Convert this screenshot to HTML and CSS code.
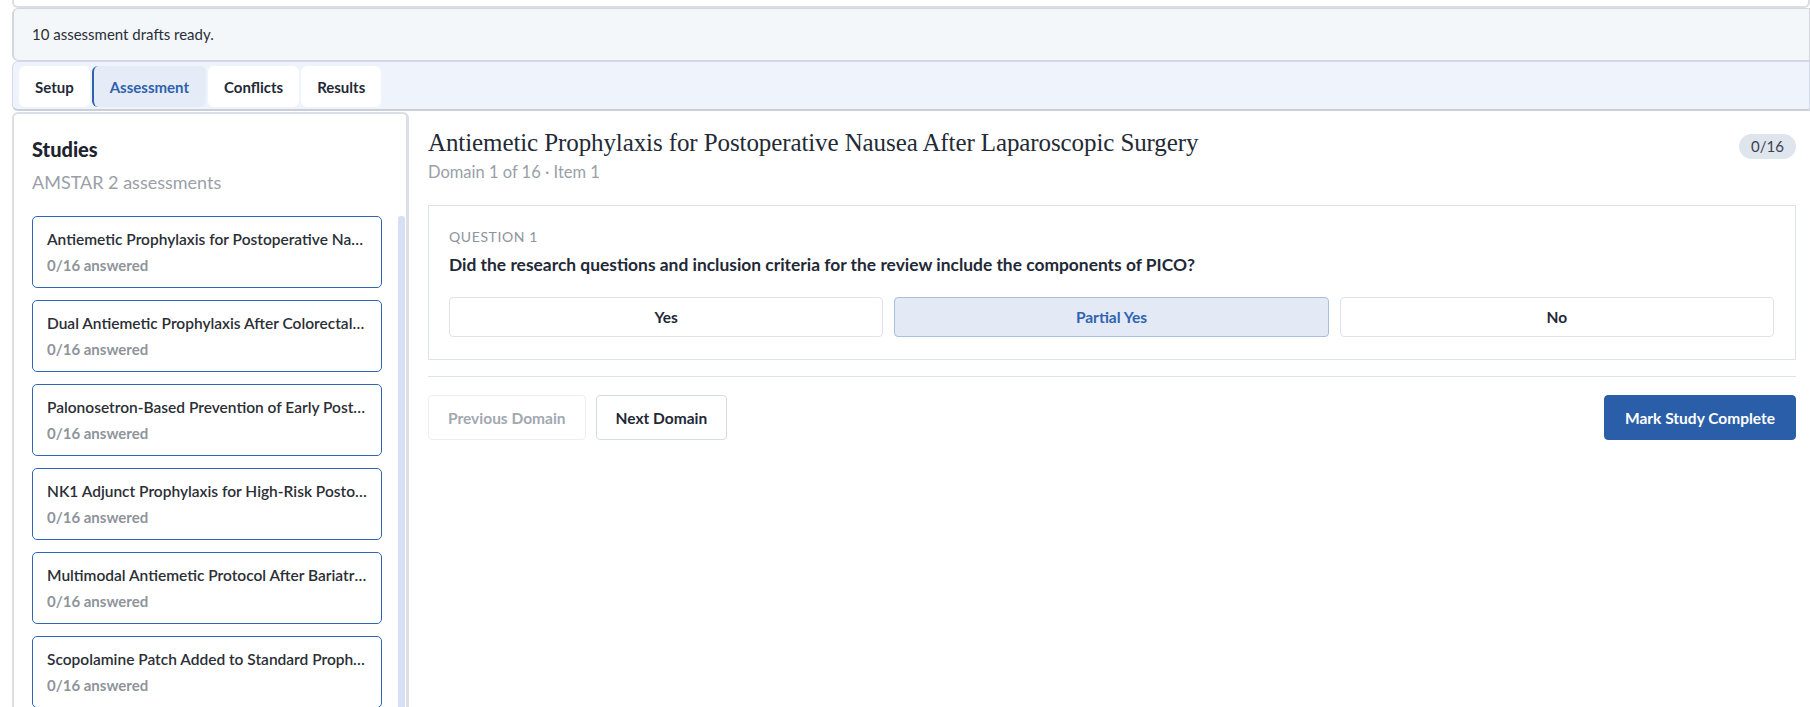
FILE: index.html
```html
<!DOCTYPE html>
<html lang="en">
<head>
  <meta charset="UTF-8">
  <title>AMSTAR 2 Assessment</title>
  <link rel="stylesheet" href="styles.css">
</head>
<body>
  <div class="page">
    <div class="top-stub"></div>

    <div class="notice">10 assessment drafts ready.</div>

    <nav class="tabs">
      <button class="tab">Setup</button>
      <button class="tab active">Assessment</button>
      <button class="tab">Conflicts</button>
      <button class="tab">Results</button>
    </nav>

    <div class="workspace">
      <aside class="sidebar">
        <h2>Studies</h2>
        <p class="sidebar-sub">AMSTAR 2 assessments</p>

        <div class="study-scroll">
          <div class="study-list">
            <div class="study-card">
              <div class="study-title">Antiemetic Prophylaxis for Postoperative Nausea After Laparoscopic Surgery</div>
              <div class="study-meta">0/16 answered</div>
            </div>
            <div class="study-card">
              <div class="study-title">Dual Antiemetic Prophylaxis After Colorectal Surgery</div>
              <div class="study-meta">0/16 answered</div>
            </div>
            <div class="study-card">
              <div class="study-title">Palonosetron-Based Prevention of Early Postoperative Vomiting</div>
              <div class="study-meta">0/16 answered</div>
            </div>
            <div class="study-card">
              <div class="study-title">NK1 Adjunct Prophylaxis for High-Risk Postoperative Patients</div>
              <div class="study-meta">0/16 answered</div>
            </div>
            <div class="study-card">
              <div class="study-title">Multimodal Antiemetic Protocol After Bariatric Surgery</div>
              <div class="study-meta">0/16 answered</div>
            </div>
            <div class="study-card">
              <div class="study-title">Scopolamine Patch Added to Standard Prophylaxis</div>
              <div class="study-meta">0/16 answered</div>
            </div>
          </div>
          <div class="scroll-thumb"></div>
        </div>
      </aside>

      <main class="assessment">
        <header class="assessment-head">
          <div>
            <h1>Antiemetic Prophylaxis for Postoperative Nausea After Laparoscopic Surgery</h1>
            <p class="position">Domain 1 of 16 · Item 1</p>
          </div>
          <span class="progress-badge">0/16</span>
        </header>

        <section class="question">
          <div class="question-label">Question 1</div>
          <p class="question-text">Did the research questions and inclusion criteria for the review include the components of PICO?</p>
          <div class="options">
            <button class="option">Yes</button>
            <button class="option selected">Partial Yes</button>
            <button class="option">No</button>
          </div>
        </section>

        <div class="nav-row">
          <button class="btn" disabled>Previous Domain</button>
          <button class="btn">Next Domain</button>
          <button class="btn primary">Mark Study Complete</button>
        </div>
      </main>
    </div>
  </div>
</body>
</html>
```

FILE: styles.css
```css
* {
  box-sizing: border-box;
}

html, body {
  margin: 0;
  padding: 0;
  background: #ffffff;
  overflow: hidden;
}

body {
  font-family: Lato, 'Noto Sans', sans-serif;
  color: #1f2937;
}

button {
  font-family: inherit;
}

.page {
  padding-left: 12px;
  height: 707px;
  display: flex;
  flex-direction: column;
}

.top-stub {
  height: 8px;
  border: 2px solid #dadde2;
  border-top: none;
  border-radius: 0 0 6px 6px;
}

.notice {
  height: 53px;
  padding: 0 18px;
  line-height: 51px;
  font-size: 15px;
  color: #2a2f37;
  background: #f4f7f9;
  border: 1px solid #d3d7dc;
  border-left-width: 2px;
  border-radius: 6px 0 0 6px;
}

.tabs {
  height: 50px;
  display: flex;
  gap: 2px;
  padding: 4px 6px;
  background: #eff3fc;
  border: 1px solid #d3d9e8;
  border-bottom: 2px solid #c9ced8;
  border-radius: 6px 0 0 6px;
}

.tab {
  height: 41px;
  padding: 0 16px;
  border: none;
  border-radius: 6px;
  background: #ffffff;
  color: #1f2937;
  font-size: 15px;
  font-weight: 700;
}

.tab.active {
  padding: 0 17px 0 16px;
  background: #e5ebf7;
  color: #2f62ad;
  border-left: 2px solid #2f62ad;
  border-radius: 6px;
}

.workspace {
  flex: 1;
  min-height: 0;
  margin-top: 1px;
  display: grid;
  grid-template-columns: 397px 1fr;
}

.sidebar {
  border: 2px solid #dcdfe3;
  border-bottom: none;
  border-right-width: 3px;
  border-radius: 6px 6px 0 0;
  padding: 22px 0 0 18px;
  overflow: hidden;
}

.sidebar h2 {
  margin: 0;
  font-size: 20px;
  font-weight: 900;
  color: #1c2430;
  line-height: 26px;
}

.sidebar-sub {
  margin: 9px 0 0;
  font-size: 18px;
  color: #9aa0a8;
  line-height: 22px;
}

.study-scroll {
  display: flex;
  margin-top: 23px;
}

.study-list {
  width: 350px;
  display: flex;
  flex-direction: column;
  gap: 12px;
}

.study-card {
  height: 72px;
  padding: 11px 13px 0 14px;
  border: 1px solid #2f65b5;
  border-radius: 5px;
  background: #ffffff;
}

.study-title {
  font-size: 15.5px;
  font-weight: 600;
  color: #2b2f36;
  line-height: 22px;
  white-space: nowrap;
  overflow: hidden;
  text-overflow: ellipsis;
}

.study-meta {
  margin-top: 4px;
  font-size: 15px;
  font-weight: 700;
  color: #8f949b;
  line-height: 22px;
}

.scroll-thumb {
  width: 7px;
  margin-left: 16px;
  background: #d6dff4;
  border-radius: 3px 3px 0 0;
}

.assessment {
  padding: 16px 14px 0 19px;
}

.assessment-head {
  display: flex;
  justify-content: space-between;
  align-items: flex-start;
}

.assessment-head h1 {
  margin: 0;
  font-family: 'Liberation Serif', 'DejaVu Serif', serif;
  font-size: 25px;
  font-weight: 400;
  letter-spacing: -0.1px;
  color: #232a34;
  line-height: 30px;
}

.position {
  margin: 3px 0 0;
  font-size: 16.5px;
  color: #9aa0a8;
  line-height: 22px;
}

.progress-badge {
  margin-top: 6px;
  padding: 0 12px;
  height: 25px;
  line-height: 25px;
  border-radius: 13px;
  background: #dfe5ec;
  color: #3a4250;
  font-size: 15px;
}

.question {
  margin-top: 22px;
  padding: 22px 21px 22px 20px;
  border: 1px solid #dde3ea;
}

.question-label {
  font-size: 14px;
  letter-spacing: 0.6px;
  text-transform: uppercase;
  color: #8e949c;
  line-height: 18px;
}

.question-text {
  margin: 7px 0 0;
  font-size: 17.4px;
  font-weight: 700;
  color: #1f2937;
  line-height: 24px;
}

.options {
  margin-top: 20px;
  display: grid;
  grid-template-columns: repeat(3, 1fr);
  gap: 11px;
}

.option {
  height: 40px;
  border: 1px solid #dfe3e8;
  border-radius: 4px;
  background: #ffffff;
  color: #1f2937;
  font-size: 15.5px;
  font-weight: 700;
}

.option.selected {
  background: #e4eaf5;
  border-color: #a9bfe0;
  color: #2f64b0;
}

.nav-row {
  margin-top: 16px;
  padding-top: 18px;
  border-top: 1px solid #dde3ea;
  display: flex;
  gap: 10px;
}

.btn {
  height: 45px;
  padding: 0 19px;
  border: 1px solid #d7dce2;
  border-radius: 4px;
  background: #ffffff;
  color: #1f2937;
  font-size: 15.5px;
  font-weight: 700;
}

.btn:disabled {
  color: #a2a8b0;
  border-color: #eceef1;
}

.btn.primary {
  margin-left: auto;
  padding: 0 20px;
  background: #2a5ea8;
  border-color: #2a5ea8;
  color: #ffffff;
}
```
